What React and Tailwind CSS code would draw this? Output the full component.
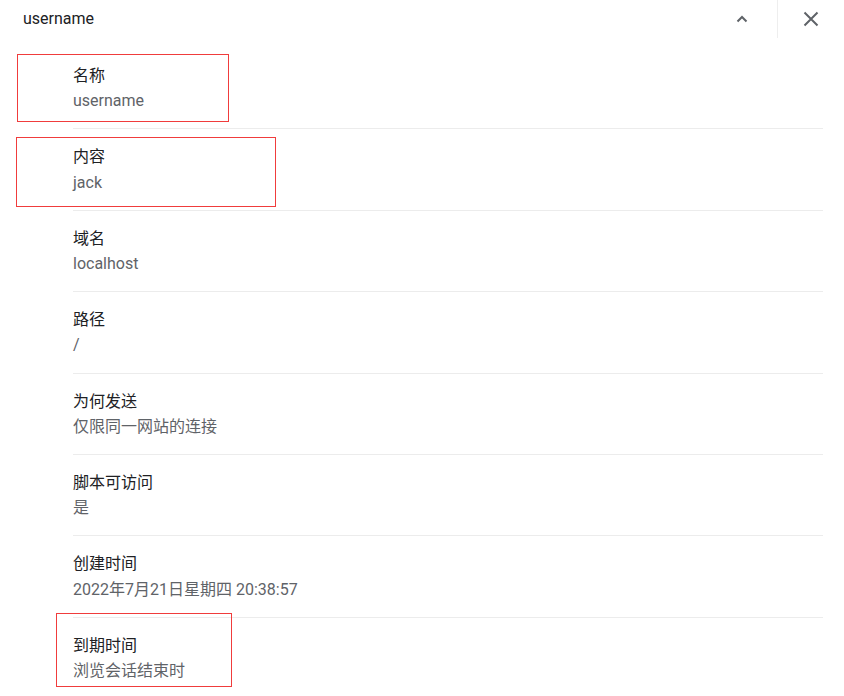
import React from "react";

const rows = [
  ["名称", "username"],
  ["内容", "jack"],
  ["域名", "localhost"],
  ["路径", "/"],
  ["为何发送", "仅限同一网站的连接"],
  ["脚本可访问", "是"],
  ["创建时间", "2022年7月21日星期四 20:38:57"],
  ["到期时间", "浏览会话结束时"],
];

export default function App() {
  return (
    <div
      className="relative w-[844px] h-[696px] bg-white overflow-hidden"
      style={{ fontFamily: 'Roboto, "Noto Sans CJK SC", sans-serif' }}
    >
      <div className="flex items-center h-[38px]">
        <div className="flex-1 pl-[23px] text-[16px] text-[#202124]">username</div>
        <div className="w-[50px] h-full flex items-center justify-center mr-[10px]">
          <svg width="12" height="8" viewBox="0 0 12 8" fill="none">
            <path d="M1.5 6.5L6 2L10.5 6.5" stroke="#5f6368" strokeWidth="2" />
          </svg>
        </div>
        <div className="w-px h-full bg-[#eeeeee]" />
        <div className="w-[66px] h-full flex items-center justify-center">
          <svg width="16" height="16" viewBox="0 0 16 16" fill="none">
            <path d="M1.5 1.5L14.5 14.5M14.5 1.5L1.5 14.5" stroke="#5f6368" strokeWidth="2" />
          </svg>
        </div>
      </div>
      <div className="pt-[10px] pl-[73px] pr-[21px]">
        {rows.map(([label, value], i) => (
          <div
            key={label}
            className={`py-[15px] ${i < rows.length - 1 ? "border-b border-[#ececec]" : ""}`}
          >
            <div className="text-[16px] leading-[25.2px] text-[#202124]">{label}</div>
            <div className="text-[16px] leading-[25.2px] text-[#5f6368]">{value}</div>
          </div>
        ))}
      </div>
      <div className="absolute left-[17px] top-[54px] w-[212px] h-[68px] border border-[#f03c3c]" />
      <div className="absolute left-[16px] top-[137px] w-[260px] h-[70px] border border-[#f03c3c]" />
      <div className="absolute left-[56px] top-[613px] w-[176px] h-[74px] border border-[#f03c3c]" />
    </div>
  );
}
